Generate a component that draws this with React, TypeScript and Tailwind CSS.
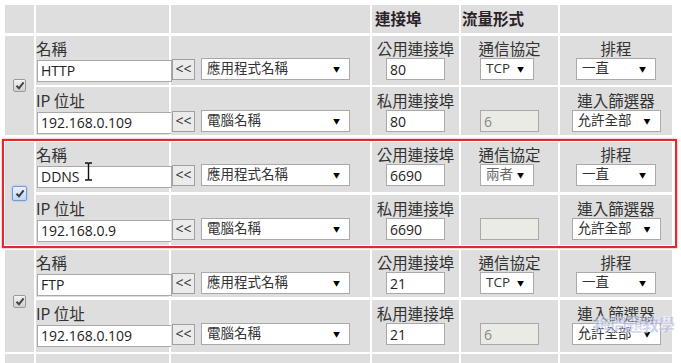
import React from "react";

const cols = "grid grid-cols-[29px_133px_199px_87px_97px_112px] gap-x-[2px]";
const cell = "bg-[#dedede]";
const cjk = "font-['Noto_Sans_CJK_TC',sans-serif]";
const latin = "font-['Open_Sans','Noto_Sans_CJK_TC',sans-serif]";

const Checkbox = ({ focus }: { focus?: boolean }) =>
  focus ? (
    <span className="flex h-[15px] w-[15px] items-center justify-center rounded-[2px] border border-[#6f9ad6] bg-gradient-to-b from-[#eaf2fc] to-[#c3d5ee] shadow-[0_0_2px_#8fb4e6]">
      <svg width="10" height="9" viewBox="0 0 10 9">
        <path d="M1.5 4.8 L4 7.3 L8.6 1.4" fill="none" stroke="#3a3a3a" strokeWidth="2" />
      </svg>
    </span>
  ) : (
    <span className="flex h-[13px] w-[13px] items-center justify-center rounded-[2px] border border-[#9a9a9a] bg-gradient-to-b from-[#f4f4f4] to-[#cfcfcf]">
      <svg width="10" height="9" viewBox="0 0 10 9">
        <path d="M1.5 4.8 L4 7.3 L8.6 1.4" fill="none" stroke="#444" strokeWidth="2" />
      </svg>
    </span>
  );

const Select = ({ text, width, muted }: { text: string; width: string; muted?: boolean }) => (
  <div
    className={`flex h-[22px] ${width} items-center justify-between border border-[#a9a9a9] bg-white pl-[5px] pr-[9px] text-[13.5px] ${
      muted ? "text-[#6a6a6a]" : "text-[#333]"
    } ${latin}`}
  >
    <span className="leading-none">{text}</span>
    <span className="text-[7px] leading-none text-black">▼</span>
  </div>
);

const TextBox = ({ value, width, disabled }: { value: string; width: string; disabled?: boolean }) => (
  <input
    readOnly
    value={value}
    className={`h-[22px] ${width} border border-[#a9a9a9] px-[3px] text-[14px] outline-none ${latin} ${
      disabled ? "bg-[#ebebe6] text-[#888]" : "bg-white text-[#222]"
    }`}
  />
);

const Label = ({ children, center }: { children: React.ReactNode; center?: boolean }) => (
  <div className={`h-[20px] text-[15.5px] leading-[20px] text-[#333] ${cjk} ${center ? "text-center" : ""}`}>
    {children}
  </div>
);

const Arrows = () => (
  <button className={`ml-px h-[21px] w-[23px] border border-[#a0a0a0] bg-[#ebebeb] text-[14px] leading-none text-[#333] ${latin}`}>
    &lt;&lt;
  </button>
);

type Entry = {
  name: string;
  ip: string;
  port: string;
  proto: string;
  protoNum: string;
  grid: string;
  focus?: boolean;
  cursor?: boolean;
};

const Group = ({ e }: { e: Entry }) => (
  <div className={`${cols} ${e.grid}`}>
    <div className={`${cell} row-span-2 flex items-center justify-center`}>
      <Checkbox focus={e.focus} />
    </div>

    {/* name row */}
    <div className={`${cell} pt-[2px]`}>
      <Label>名稱</Label>
      <div className="relative ml-px w-[135px]">
        <TextBox value={e.name} width="w-[135px]" />
        {e.cursor ? (
          <svg className="absolute left-[47px] top-[-2px]" width="9" height="19" viewBox="0 0 9 19">
            <path d="M1 1 H3.5 Q4.5 1.5 5.5 1 H8 M4.5 1.5 V17.5 M1 18 H3.5 Q4.5 17.5 5.5 18 H8" fill="none" stroke="#111" strokeWidth="1.4" />
          </svg>
        ) : null}
      </div>
    </div>
    <div className={`${cell} pt-[22px]`}>
      <div className="flex items-center">
        <Arrows />
        <div className="ml-[6px]">
          <Select text="應用程式名稱" width="w-[149px]" />
        </div>
      </div>
    </div>
    <div className={`${cell} flex flex-col items-center pt-[2px]`}>
      <Label center>公用連接埠</Label>
      <TextBox value={e.port} width="w-[59px]" />
    </div>
    <div className={`${cell} flex flex-col items-center pt-[2px]`}>
      <Label center>通信協定</Label>
      <div className="-ml-[5px]">
        <Select text={e.proto} width="w-[54px]" muted={e.proto === "兩者"} />
      </div>
    </div>
    <div className={`${cell} flex flex-col items-center pt-[2px]`}>
      <Label center>排程</Label>
      <Select text="一直" width="w-[80px]" />
    </div>

    {/* ip row */}
    <div className={`${cell} pt-[3px]`}>
      <Label>IP 位址</Label>
      <div className="ml-px">
        <TextBox value={e.ip} width="w-[135px]" />
      </div>
    </div>
    <div className={`${cell} pt-[23px]`}>
      <div className="flex items-center">
        <Arrows />
        <div className="ml-[6px]">
          <Select text="電腦名稱" width="w-[149px]" />
        </div>
      </div>
    </div>
    <div className={`${cell} flex flex-col items-center pt-[3px]`}>
      <Label center>私用連接埠</Label>
      <TextBox value={e.port} width="w-[59px]" />
    </div>
    <div className={`${cell} flex flex-col items-center pt-[23px]`}>
      <TextBox value={e.protoNum} width="w-[59px]" disabled />
    </div>
    <div className={`${cell} flex flex-col items-center pt-[3px]`}>
      <Label center>連入篩選器</Label>
      <Select text="允許全部" width="w-[89px]" />
    </div>
  </div>
);

const entries: Entry[] = [
  { name: "HTTP", ip: "192.168.0.109", port: "80", proto: "TCP", protoNum: "6", grid: "grid-rows-[49px_48px] gap-y-[2px]" },
  { name: "DDNS", ip: "192.168.0.9", port: "6690", proto: "兩者", protoNum: "", grid: "grid-rows-[50px_50px] gap-y-[3px]", focus: true, cursor: true },
  { name: "FTP", ip: "192.168.0.109", port: "21", proto: "TCP", protoNum: "6", grid: "grid-rows-[47px_52px] gap-y-[3px]" },
];

export default function App() {
  return (
    <div className="relative h-[363px] w-[681px] overflow-hidden bg-white">
      <div className="flex flex-col items-start pl-[5px] pt-[5px]">
        <div className={`${cols} h-[28px]`}>
          <div className={cell} />
          <div className={cell} />
          <div className={cell} />
          <div className={`${cell} flex items-center px-[3px] text-[15.5px] font-bold text-[#2a2226] ${cjk}`}>連接埠</div>
          <div className={`${cell} flex items-center px-[1px] text-[15.5px] font-bold text-[#2a2226] ${cjk}`}>流量形式</div>
          <div className={cell} />
        </div>

        <div className="mt-[3px]">
          <Group e={entries[0]} />
        </div>

        <div className="-ml-[3px] mt-[4px] border-2 border-[#e3282f] py-px pl-px pr-[3px] shadow-[0_0_2px_rgba(230,40,40,0.6)]">
          <Group e={entries[1]} />
        </div>

        <div className="mt-[2px]">
          <Group e={entries[2]} />
        </div>

        <div className={`${cols} mt-[2px] h-[20px]`}>
          <div className={cell} />
          <div className={cell} />
          <div className={cell} />
          <div className={cell} />
          <div className={cell} />
          <div className={cell} />
        </div>
      </div>

      <div className={`absolute left-[594px] top-[311px] text-[17px] font-black tracking-[-1px] text-[#9aa5dc]/50 [-webkit-text-stroke:0.5px_rgba(255,255,255,0.8)] ${cjk}`}>
        梅問題教學
      </div>
    </div>
  );
}
